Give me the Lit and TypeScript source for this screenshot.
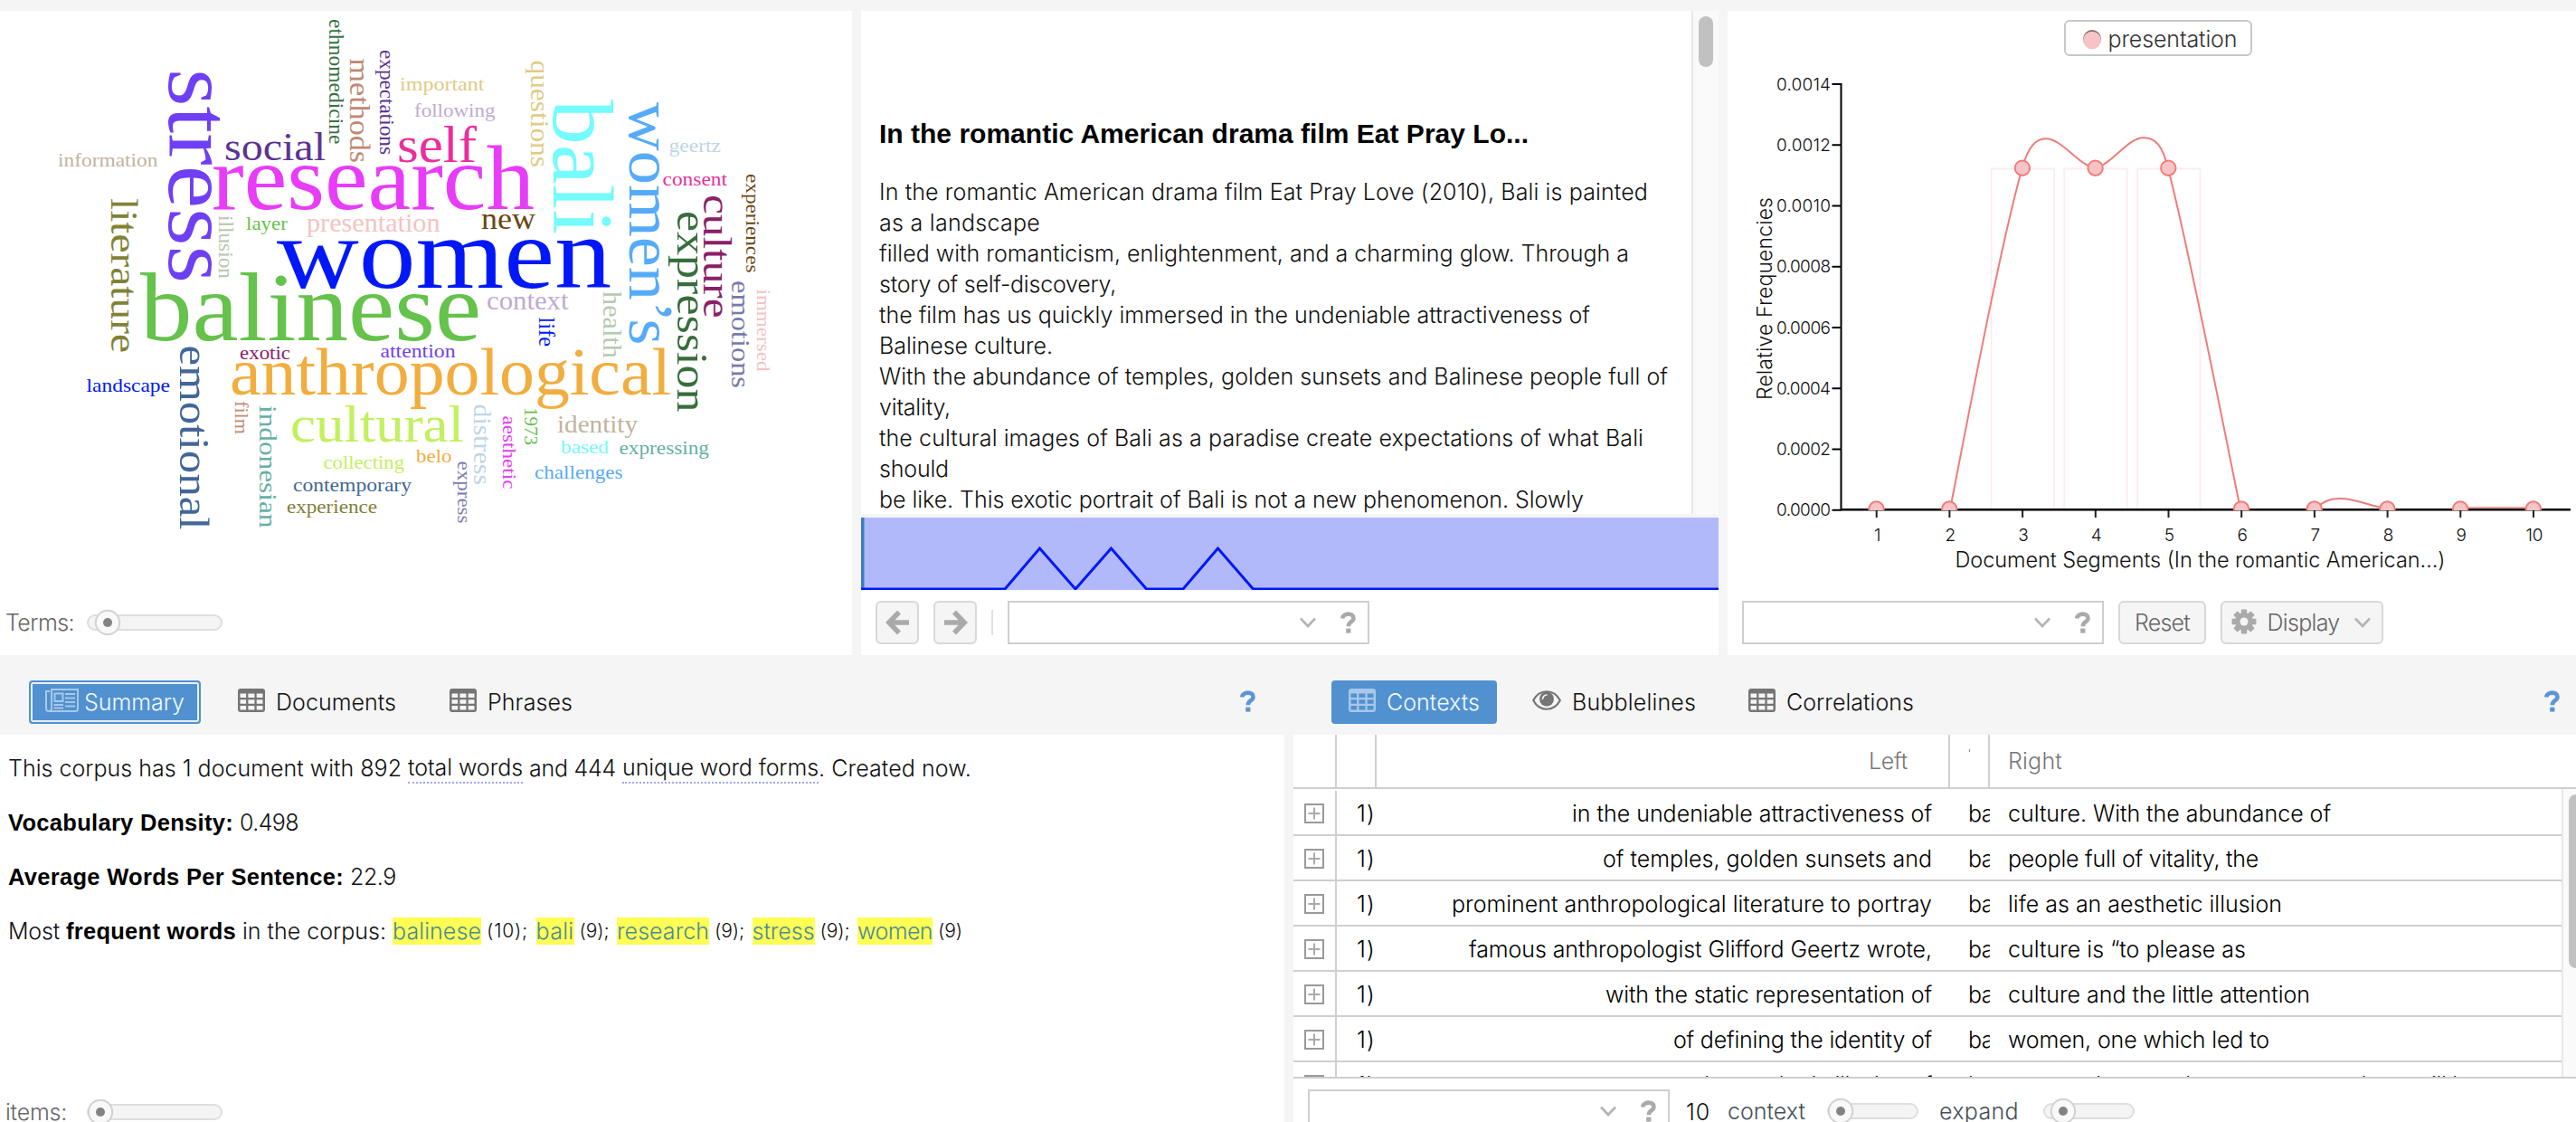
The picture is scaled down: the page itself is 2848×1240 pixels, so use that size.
import { LitElement, html, svg, css } from "lit";
import { customElement, property } from "lit/decorators.js";

/* Text set to a known measure: the tracking is derived from its natural width. */
@customElement("fit-text")
class FitText extends LitElement {
  static styles = css`
    :host { display: inline-block; flex: none; width: max-content; white-space: nowrap; }
  `;
  @property({ type: Number }) measure = 0;
  firstUpdated() {
    const n = (this.textContent ?? "").length;
    const w = this.getBoundingClientRect().width;
    if (this.measure && n && w) this.style.letterSpacing = `${((this.measure - w) / n).toFixed(3)}px`;
  }
  render() { return html`<slot></slot>`; }
}

type Word = [string, string, number, number, number, number];

/* text, colour, start, end, baseline, size */
const ACROSS: Word[] = [
  ["women", "#0018f9", 306, 676, 317.5, 113],
  ["balinese", "#65c24b", 155, 532, 375.6, 108],
  ["research", "#e83cf9", 234, 591, 230.5, 102],
  ["anthropological", "#f2ad3f", 254, 742, 436, 73],
  ["cultural", "#c2f05f", 321, 513, 488, 58],
  ["social", "#5c3391", 248, 360, 177, 45],
  ["self", "#ea2f9c", 439, 527, 179, 57],
  ["presentation", "#f5c3c2", 339, 486.5, 255.8, 29],
  ["layer", "#65c24b", 272, 318, 254, 22],
  ["information", "#c3b3a0", 64, 174.5, 184, 22],
  ["landscape", "#0018f9", 95.5, 188, 432.6, 22],
  ["exotic", "#8b2067", 265, 321, 397, 22],
  ["attention", "#6f3ff5", 420.5, 503.5, 395, 22],
  ["new", "#6a4712", 532, 592, 252.7, 33],
  ["context", "#c0abd0", 538, 628.5, 341.6, 29],
  ["important", "#e0cb86", 442, 535.5, 100, 22],
  ["following", "#c0abd0", 458, 547.5, 129, 22],
  ["geertz", "#bfd5e6", 739.5, 797, 168.4, 22],
  ["consent", "#ea2f9c", 732.5, 804, 204.8, 22],
  ["belo", "#f2ad3f", 460, 499.5, 511, 22],
  ["collecting", "#c2f05f", 357.5, 447, 517.6, 22],
  ["contemporary", "#426798", 324, 455, 543, 22],
  ["experience", "#818236", 317, 417, 567, 22],
  ["identity", "#c3b3a0", 616, 705, 478, 27],
  ["based", "#73fbfd", 620, 673, 501.4, 22],
  ["expressing", "#65b0a4", 684.5, 784, 502.2, 22],
  ["challenges", "#56abf9", 591, 688.5, 529, 22],
];

const DOWN: Word[] = [
  ["stress", "#6f3ff5", 76, 313, 187, 99],
  ["literature", "#818236", 219, 390, 123, 43],
  ["emotional", "#426798", 381.5, 585.5, 198.7, 47],
  ["ethnomedicine", "#377140", 21, 159.5, 364, 23],
  ["methods", "#bf8973", 64.5, 180, 386.7, 32],
  ["expectations", "#5c3391", 55, 171, 420.3, 23],
  ["illusion", "#b8c8b0", 238, 308, 242.3, 23],
  ["film", "#bf8973", 443, 480, 260, 22],
  ["indonesian", "#65b0a4", 448, 583.5, 286.7, 28],
  ["questions", "#e0cb86", 66.5, 185, 587.3, 29],
  ["bali", "#73fbfd", 110, 259, 612.3, 95],
  ["women’s", "#56abf9", 113, 381.5, 696.3, 69],
  ["culture", "#8b2067", 215, 351.5, 777.7, 45],
  ["expression", "#376e3c", 233, 455.5, 749.3, 48],
  ["experiences", "#6a4712", 192, 301.5, 825, 22],
  ["emotions", "#7a7aaa", 310, 429, 809, 29],
  ["immersed", "#f5c3c2", 319.5, 410.5, 837, 22],
  ["health", "#b8c8b0", 322, 396, 666.7, 29],
  ["life", "#0018f9", 350.5, 383, 596, 25],
  ["distress", "#bfd5e6", 446.5, 536, 524, 27],
  ["aesthetic", "#e83cf9", 459.5, 540.5, 555.7, 22],
  ["1973", "#65c24b", 450, 492, 580.3, 22],
  ["express", "#7a7aaa", 509.5, 578.5, 506.3, 22],
];

const icons = {
  table: html`<svg class="ico" width="30" height="26" viewBox="0 0 30 26">
    <path fill="currentColor" fill-rule="evenodd" d="M3 0H27a3 3 0 0 1 3 3V23a3 3 0 0 1-3 3H3a3 3 0 0 1-3-3V3a3 3 0 0 1 3-3ZM2.5 5.5v4.6h6.6V5.500ZM11.400 5.500v4.600h7v-4.600ZM20.700 5.500v4.600h6.800v-4.600ZM2.500 12.200v4.600h6.600v-4.600ZM11.400 12.200v4.600h7v-4.600ZM20.700 12.200v4.600h6.800v-4.600ZM2.500 19v4.600h6.600V19ZM11.400 19v4.600h7V19ZM20.700 19v4.600h6.800V19Z"/></svg>`,
  news: html`<svg class="ico" width="37" height="26" viewBox="0 0 37 26" fill="none" stroke="currentColor" stroke-width="2">
    <path d="M5 3H1V22a3 3 0 0 0 6 0V1H36V22.500a2.500 2.500 0 0 1-2.500 2.500H4"/>
    <rect x="10.500" y="5.500" width="9" height="8.500"/><path d="M22 6H33M22 10.500H33M22 15H33M9.500 18H20M22 19.500H33M9.500 21.500H20"/></svg>`,
  eye: html`<svg class="ico" width="32" height="22" viewBox="0 0 32 22">
    <path d="M1.200 11C8-2 24-2 30.800 11 24 24 8 24 1.200 11Z" fill="none" stroke="currentColor" stroke-width="2.200"/>
    <circle cx="16" cy="9.500" r="8" fill="currentColor"/><path d="M11.500 9.500a4.500 4.500 0 0 1 4.500-4.500" fill="none" stroke="#f5f5f5" stroke-width="1.600" stroke-linecap="round"/></svg>`,
  left: html`<svg width="27" height="28" viewBox="0 0 27 28" fill="none" stroke="currentColor" stroke-width="5.500">
    <path d="M15 2.500 3.800 14 15 25.500M4 14H26"/></svg>`,
  right: html`<svg width="27" height="28" viewBox="0 0 27 28" fill="none" stroke="currentColor" stroke-width="5.500">
    <path d="M12 2.500 23.200 14 12 25.500M23 14H1"/></svg>`,
  chevron: html`<svg width="18" height="12" viewBox="0 0 18 12" fill="none" stroke="#b4b4b4" stroke-width="2.600"><path d="M1 1.500 9 10 17 1.500"/></svg>`,
  help: html`<svg width="17" height="24" viewBox="0 0 17 24">
    <path d="M2 7.500C3 1 14.500 1 14.500 7.200 14.500 11.500 8.800 11 8.800 16.300" fill="none" stroke="currentColor" stroke-width="4.600"/><rect x="6.200" y="18.600" width="5.200" height="5" fill="currentColor"/></svg>`,
  gear: html`<svg width="28" height="28" viewBox="-14 -14 28 28">
    ${[0, 45, 90, 135].map((a) => svg`<rect x="-3.200" y="-13.500" width="6.400" height="27" rx="1" fill="currentColor" transform="rotate(${a})"/>`)}
    <circle r="7.200" fill="none" stroke="currentColor" stroke-width="5.600"/><circle r="4.500" fill="#f5f5f5"/></svg>`,
  plus: html`<svg width="22" height="22" viewBox="0 0 22 22" fill="none"><rect x="1" y="1" width="20" height="20" stroke="#999" stroke-width="2"/><path d="M11 4.500V17.500M4.500 11H17.500" stroke="#aaa" stroke-width="2"/></svg>`,
};

const shared = css`
  * { box-sizing: border-box; }
  svg { display: block; flex: none; }
  .toolbar { display: flex; align-items: center; flex: none; }
`;

@customElement("vt-slider")
class VtSlider extends LitElement {
  @property({ type: Number }) length = 150;
  @property({ type: Number }) at = 15;
  static styles = css`:host { display: block; flex: none; } svg { display: block; }`;
  render() {
    return html`<svg width=${this.length} height="30" viewBox="0 0 ${this.length} 30">
      <rect x="1" y="7" width=${this.length - 2} height="16" rx="8" fill="#f4f4f4" stroke="#dedede" stroke-width="2"/>
      <circle cx=${this.at} cy="15" r="13.200" fill="#f9f9f9" stroke="#d2d2d2" stroke-width="2"/>
      <circle cx=${this.at} cy="15" r="5" fill="#838383"/></svg>`;
  }
}

@customElement("vt-combo")
class VtCombo extends LitElement {
  static styles = [shared, css`
    :host { display: flex; flex: none; align-items: center; justify-content: flex-end; gap: 27px; height: 48px; box-sizing: border-box;
      border: 2px solid #cfcfcf; background: #fff; color: #aaa; padding-right: 13px; }
  `];
  render() { return html`${icons.chevron}${icons.help}`; }
}

@customElement("vt-cirrus")
class VtCirrus extends LitElement {
  static styles = [shared, css`
    :host { display: flex; flex-direction: column; background: #fff; }
    .cloud { font-family: "Liberation Serif", serif; }
    .toolbar { gap: 14px; height: 72px; padding-left: 6px; color: #666; }
  `];
  render() {
    return html`<svg class="cloud" width="942" height="640" viewBox="0 12 942 640">
        ${ACROSS.map(([t, c, a, b, y, s]) => svg`<text x=${a} y=${y} font-size=${s} fill=${c} textLength=${b - a} lengthAdjust="spacingAndGlyphs">${t}</text>`)}
        ${DOWN.map(([t, c, a, b, x, s]) => svg`<text transform="translate(${x} ${a}) rotate(90)" font-size=${s} fill=${c} textLength=${b - a} lengthAdjust="spacingAndGlyphs">${t}</text>`)}
      </svg>
      <div class="toolbar"><fit-text measure="76">Terms:</fit-text><vt-slider length="150" at="23"></vt-slider></div>`;
  }
}

const READER: [string, number][] = [
  ["In the romantic American drama film Eat Pray Love (2010), Bali is painted", 850],
  ["as a landscape", 178],
  ["filled with romanticism, enlightenment, and a charming glow. Through a", 829],
  ["story of self-discovery,", 262],
  ["the film has us quickly immersed in the undeniable attractiveness of", 786],
  ["Balinese culture.", 192],
  ["With the abundance of temples, golden sunsets and Balinese people full of", 872],
  ["vitality,", 79],
  ["the cultural images of Bali as a paradise create expectations of what Bali", 845],
  ["should", 77],
  ["be like. This exotic portrait of Bali is not a new phenomenon. Slowly", 779],
];

@customElement("vt-reader")
class VtReader extends LitElement {
  static styles = [shared, css`
    :host { display: flex; flex-direction: column; background: #fff; }
    .page { display: flex; height: 556px; overflow: hidden; }
    .text { flex: 1; padding: 116px 0 0 20px; }
    .title { font-family: "Liberation Sans", sans-serif; font-size: 30px; font-weight: 700; line-height: 40px; color: #000; margin-bottom: 27px; }
    .line { height: 34px; line-height: 34px; }
    .track { width: 30px; background: #fafafa; border-left: 2px solid #e8e8e8; padding: 6px 0 0 6px; }
    .thumb { width: 16px; height: 56px; border-radius: 8px; background: #c1c1c1; }
    .spark { border-top: 4px solid #f5f5f5; }
    .toolbar { height: 72px; padding: 0 0 0 16px; }
    .btn { display: flex; align-items: center; justify-content: center; width: 48px; height: 48px; border: 2px solid #d8d8d8; border-radius: 6px;
      background: #f5f5f5; color: #aaa; margin-right: 16px; }
    .sep { width: 2px; height: 28px; background: #e1e1e1; margin-right: 16px; }
    .combo { width: 400px; }
  `];
  render() {
    return html`<div class="page"><div class="text">
          <div class="title"><fit-text measure="718">In the romantic American drama film Eat Pray Lo...</fit-text></div>
          ${READER.map(([t, w]) => html`<div class="line"><fit-text measure=${w}>${t}</fit-text></div>`)}
        </div><div class="track"><div class="thumb"></div></div></div>
      <svg class="spark" width="948" height="84" viewBox="0 0 948 80">
        <rect width="948" height="80" fill="#b2b9fb"/><rect width="3.500" height="80" fill="#3d7cc4"/>
        <path d="M0 79H159L197.500 34 237 79 276.500 34 315.500 79H356L394.500 34 433.500 79H948" fill="none" stroke="#0018f9" stroke-width="3"/>
      </svg>
      <div class="toolbar"><div class="btn">${icons.left}</div><div class="btn">${icons.right}</div><div class="sep"></div><vt-combo class="combo"></vt-combo></div>`;
  }
}

@customElement("vt-trends")
class VtTrends extends LitElement {
  static styles = [shared, css`
    :host { display: flex; flex-direction: column; background: #fff; }
    .chart { height: 640px; font-family: "Inter", "Liberation Sans", sans-serif; font-weight: 300; }
    .toolbar { height: 72px; padding-left: 16px; gap: 16px; color: #666; }
    .combo { width: 400px; }
    .btn { display: flex; align-items: center; justify-content: center; height: 48px; border: 2px solid #d8d8d8; border-radius: 6px; background: #f5f5f5; }
    .reset { width: 97px; }
    .display { width: 180px; padding-right: 3px; }
    .gear { color: #aaa; margin: -3px 12px 0 0; }
    .caret { margin-left: 16px; }
  `];
  render() {
    const xs = [0, 1, 2, 3, 4, 5, 6, 7, 8, 9].map((i) => 2074.7 + i * 80.7);
    const high = [2, 3, 4];
    return html`<svg class="chart" width="938" height="640" viewBox="1910 12 938 640">
        <rect x="2283" y="23" width="206" height="38" rx="5" fill="#fff" stroke="#c8c8c8" stroke-width="2"/>
        <circle cx="2313" cy="43" r="10" fill="#8c6a6c"/><circle cx="2313" cy="44.500" r="9.800" fill="#f6c4c6"/>
        <text x="2330.500" y="52" font-size="25" fill="#333" textLength="143">presentation</text>
        ${high.map((i) => svg`<rect x=${xs[i] - 34.5} y="186.500" width="69.500" height="377" fill="none" stroke="#fdeef0" stroke-width="2"/>`)}
        <path d="M2035.500 92V563M2035 563H2842" fill="none" stroke="#000" stroke-width="2"/>
        ${["0.0014", "0.0012", "0.0010", "0.0008", "0.0006", "0.0004", "0.0002", "0.0000"].map((t, i) => {
          const y = 93 + i * 67.25;
          return svg`<path d="M2025.500 ${y}H2036" stroke="#000" stroke-width="2"/><text x="1964" y=${y + 6.5} font-size="19" fill="#111" textLength="60">${t}</text>`;
        })}
        ${xs.map((x, i) => svg`<path d="M${x} 563V572" stroke="#222" stroke-width="2"/><text x=${x + 1} y="598" font-size="19" fill="#111" text-anchor="middle">${i + 1}</text>`)}
        <g fill="none" stroke="#ef7d79" stroke-width="2">
          <path d="M2156 563C2180 440 2211 275 2235.600 186 2243 160 2252 153.300 2261.600 153.300 2280 153.300 2296 181 2316 186 2336 181 2352 152.300 2369.800 152.300 2384 152.300 2391 162 2397 186 2420 275 2452 440 2477 563"/>
          <path d="M2559 563C2570 553 2577 551 2588 551 2605 551 2622 560 2639 562"/><path d="M2722 561H2800" stroke-width="1.500"/>
          <path d="M2035 563.500H2842" stroke="#000"/>
        </g>
        <clipPath id="plot"><rect x="2035" y="80" width="810" height="484"/></clipPath>
        <g clip-path="url(#plot)" fill="#f6c4c6" stroke="#ef7d79" stroke-width="2">
          ${xs.map((x, i) => svg`<circle cx=${x - 0.2} cy=${high.includes(i) ? 185.700 : 562.500} r="8.200"/>`)}
        </g>
        <text x="2161.500" y="627" font-size="23.500" fill="#111" textLength="542">Document Segments (In the romantic American…)</text>
        <text transform="translate(1959 442) rotate(-90)" font-size="23" fill="#111" textLength="224">Relative Frequencies</text>
      </svg>
      <div class="toolbar"><vt-combo class="combo"></vt-combo>
        <div class="btn reset"><fit-text measure="61">Reset</fit-text></div>
        <div class="btn display"><span class="gear">${icons.gear}</span><fit-text measure="80">Display</fit-text><span class="caret">${icons.chevron}</span></div></div>`;
  }
}

type Tab = { icon: unknown; label: string; width: number; active?: boolean; focus?: boolean; box: number };

@customElement("vt-tabs")
class VtTabs extends LitElement {
  @property({ attribute: false }) tabs: Tab[] = [];
  static styles = [shared, css`
    :host { display: flex; flex: none; align-items: center; height: 88px; box-sizing: border-box; padding: 16px 18px 0 0; color: #111; }
    .tab { display: flex; align-items: center; justify-content: center; gap: 12px; height: 48px; border-radius: 4px; line-height: 46px; }
    .tab .i { color: #757575; margin-top: -5px; }
    .active { background: #5191d0; color: #f3f8fc; }
    .active .i { color: #a8c8e8; }
    .focus { border: 2px solid #5191d0; box-shadow: inset 0 0 0 2px #e6eff8; gap: 6px; line-height: 44px; }
    .help { margin: -2px 0 0 auto; color: #5b96d4; }
  `];
  render() {
    return html`${this.tabs.map((t) => html`<div class="tab ${t.active ? "active" : ""} ${t.focus ? "focus" : ""}" style="width:${t.box}px">
        <span class="i">${t.icon}</span><fit-text measure=${t.width}>${t.label}</fit-text></div>`)}
      <span class="help">${icons.help}</span>`;
  }
}

const FREQUENT: [string, number, string, number][] = [
  ["balinese", 98, "(10);", 46], ["bali", 42, "(9);", 33], ["research", 102, "(9);", 33], ["stress", 69, "(9);", 33], ["women", 83, "(9)", 27],
];

@customElement("vt-summary")
class VtSummary extends LitElement {
  static styles = [shared, css`
    :host { display: flex; flex-direction: column; }
    .tabs { padding-left: 32px; padding-right: 32px; }
    .body { flex: 1; display: flex; flex-direction: column; background: #fff; padding: 20px 0 0 9px; gap: 26px; color: #111; }
    .line { display: flex; height: 34px; line-height: 34px; align-items: center; }
    b { font-family: "Liberation Sans", sans-serif; font-weight: 700; color: #000; font-size: 25.5px; }
    .info { border-bottom: 2px dotted #a5a5f2; line-height: 27px; padding-bottom: 2px; margin-top: 3px; }
    .gap { width: 7px; }
    .hit { background: #ffff54; color: #4a8a9c; height: 30px; line-height: 30px; }
    .count { font-size: 21px; margin: 0 8.500px 0 6px; line-height: 36px; }
    .toolbar { gap: 22px; height: 30px; padding-left: 6px; color: #666; background: #fff; margin-bottom: -4px; }
  `];
  render() {
    return html`<vt-tabs class="tabs" .tabs=${[
        { icon: icons.news, label: "Summary", width: 111, box: 190, active: true, focus: true },
        { icon: icons.table, label: "Documents", width: 133, box: 257 },
        { icon: icons.table, label: "Phrases", width: 94, box: 172 },
      ]}></vt-tabs>
      <div class="body">
        <div class="line"><fit-text measure="435">This corpus has 1 document with 892</fit-text><span class="gap"></span><fit-text class="info" measure="127">total words</fit-text><span class="gap"></span><fit-text measure="96">and 444</fit-text><span class="gap"></span><fit-text class="info" measure="217">unique word forms</fit-text><fit-text measure="169">. Created now.</fit-text></div>
        <div class="line"><fit-text measure="249"><b>Vocabulary Density:</b></fit-text><span class="gap"></span><fit-text measure="65">0.498</fit-text></div>
        <div class="line"><fit-text measure="371"><b>Average Words Per Sentence:</b></fit-text><span class="gap"></span><fit-text measure="51">22.9</fit-text></div>
        <div class="line"><fit-text measure="57">Most</fit-text><span class="gap"></span><fit-text measure="188"><b>frequent words</b></fit-text><span class="gap"></span><fit-text measure="159">in the corpus:</fit-text><span class="gap"></span>
          ${FREQUENT.map(([w, a, n, b]) => html`<fit-text class="hit" measure=${a}>${w}</fit-text><fit-text class="count" measure=${b}>${n}</fit-text>`)}</div>
      </div>
      <div class="toolbar"><fit-text measure="68">items:</fit-text><vt-slider length="150" at="15"></vt-slider></div>`;
  }
}

const CONTEXTS: [string, number, string, number][] = [
  ["in the undeniable attractiveness of", 398, "culture. With the abundance of", 357],
  ["of temples, golden sunsets and", 364, "people full of vitality, the", 277],
  ["prominent anthropological literature to portray", 531, "life as an aesthetic illusion", 303],
  ["famous anthropologist Glifford Geertz wrote,", 512, "culture is “to please as", 263],
  ["with the static representation of", 361, "culture and the little attention", 334],
  ["of defining the identity of", 286, "women, one which led to", 289],
  ["the aesthetic illusion of", 259, "women, her own home was never here will be", 520],
];

@customElement("vt-contexts")
class VtContexts extends LitElement {
  static styles = [shared, css`
    :host { display: flex; flex-direction: column; }
    .tabs { padding-left: 42px; }
    .head, .row { display: grid; grid-template-columns: 48px 44px 634px 44px 1fr; flex: none; }
    .head { height: 60px; background: #fff; border-bottom: 2px solid #cfcfcf; color: #777; line-height: 59px; }
    .head > div { border-right: 2px solid #cfcfcf; }
    .head > div:last-child { border-right: 0; }
    .head .l { padding-right: 45px; }
    .grid { display: flex; height: 318px; overflow: hidden; background: #fff; color: #000; }
    .rows { flex: 1; min-width: 0; padding-top: 2px; }
    .row { height: 50px; border-bottom: 2px solid #cfcfcf; line-height: 50px; }
    .row > div { height: 48px; }
    .exp { border-right: 2px solid #cfcfcf; padding: 14px 0 0 12px; }
    .n { padding-left: 22px; }
    .l { text-align: right; padding-right: 20px; }
    .k { overflow: hidden; padding-left: 20px; white-space: nowrap; }
    .r { padding-left: 20px; }
    .dot { padding: 16px 0 0 21px; }
    .dot i { display: block; width: 1px; height: 3px; background: #888; }
    .track { width: 16px; background: #fafafa; border-left: 2px solid #e8e8e8; padding: 6px 0 0 6px; overflow: hidden; }
    .thumb { width: 16px; height: 192px; border-radius: 8px; background: #c1c1c1; }
    .toolbar { border-top: 2px solid #cfcfcf; background: #fff; align-items: flex-start; height: 50px; padding: 12px 0 0 16px; color: #454f59; overflow: hidden; line-height: 48px; }
    .combo { width: 400px; }
    .ten { margin: 1px 19px 0 18px; color: #111; }
    .s1 { margin: 9px 23px 0 24px; }
    .s2 { margin: 9px 0 0 27px; }
  `];
  render() {
    return html`<vt-tabs class="tabs" .tabs=${[
        { icon: icons.table, label: "Contexts", width: 103, box: 183, active: true },
        { icon: icons.eye, label: "Bubblelines", width: 137, box: 259 },
        { icon: icons.table, label: "Correlations", width: 141, box: 221 },
      ]}></vt-tabs>
      <div class="head"><div></div><div></div><div class="l"><fit-text measure="43">Left</fit-text></div><div class="dot"><i></i></div><div class="r"><fit-text measure="60">Right</fit-text></div></div>
      <div class="grid"><div class="rows">${CONTEXTS.map(([l, lw, r, rw]) => html`<div class="row">
          <div class="exp">${icons.plus}</div><div class="n"><fit-text measure="21">1)</fit-text></div>
          <div class="l"><fit-text measure=${lw}>${l}</fit-text></div><div class="k"><fit-text measure="93">balinese</fit-text></div>
          <div class="r"><fit-text measure=${rw}>${r}</fit-text></div></div>`)}</div>
        <div class="track"><div class="thumb"></div></div></div>
      <div class="toolbar"><vt-combo class="combo"></vt-combo><fit-text class="ten" measure="27">10</fit-text>
        <fit-text measure="86">context</fit-text><vt-slider class="s1" length="101" at="15"></vt-slider>
        <fit-text measure="88">expand</fit-text><vt-slider class="s2" length="101" at="22"></vt-slider></div>`;
  }
}

@customElement("app-root")
class AppRoot extends LitElement {
  static styles = css`
    :host { display: flex; flex-direction: column; width: 2848px; height: 1240px; box-sizing: border-box; padding-top: 12px; overflow: hidden;
      background: #f5f5f5; color: #111; font-family: "Inter", "Liberation Sans", sans-serif; font-weight: 300; font-size: 25px; }
    .top { display: grid; grid-template-columns: 942px 948px 938px; gap: 10px; height: 712px; }
    .bottom { display: grid; grid-template-columns: 1420px 1418px; gap: 10px; height: 516px; }
  `;
  render() {
    return html`<div class="top"><vt-cirrus></vt-cirrus><vt-reader></vt-reader><vt-trends></vt-trends></div>
      <div class="bottom"><vt-summary></vt-summary><vt-contexts></vt-contexts></div>`;
  }
}
